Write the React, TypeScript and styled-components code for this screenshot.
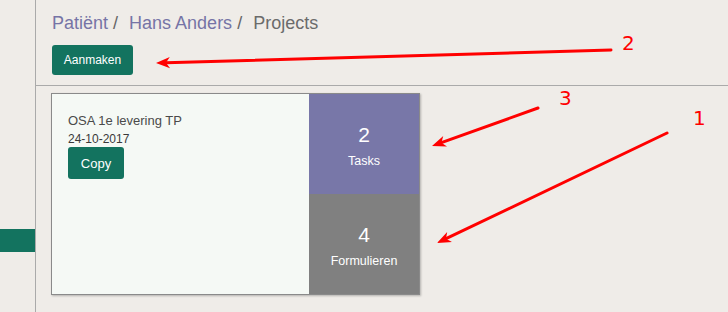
import React from 'react';
import styled, { createGlobalStyle } from 'styled-components';

const GlobalStyle = createGlobalStyle`
  html, body {
    margin: 0;
    padding: 0;
    background: #efece8;
  }
  body {
    font-family: "Liberation Sans", Arial, sans-serif;
  }
`;

const Page = styled.div`
  position: relative;
  display: flex;
  width: 728px;
  height: 312px;
  overflow: hidden;
  background: #efece8;
`;

const Sidebar = styled.aside`
  width: 35px;
  flex-shrink: 0;
  border-right: 1px solid #aaaaaa;
  padding-top: 229px;
`;

const SideActive = styled.div`
  height: 23px;
  background: #13735f;
`;

const Main = styled.main`
  flex: 1;
  display: flex;
  flex-direction: column;
`;

const Header = styled.header`
  padding: 13px 0 10px 16px;
  border-bottom: 1px solid #aaaaaa;
`;

const Breadcrumb = styled.nav`
  display: flex;
  font-size: 18px;
  line-height: 20px;
  color: #666666;
  margin-bottom: 12px;
`;

const Crumb = styled.a<{ $active?: boolean }>`
  color: ${p => (p.$active ? '#6b6b6b' : '#7674a6')};
  text-decoration: none;
`;

const Sep = styled.span`
  margin: 0 11px 0 5px;
  color: #666666;
`;

const Button = styled.button<{ $w: number; $h: number; $size: number }>`
  display: inline-flex;
  align-items: center;
  justify-content: center;
  width: ${p => p.$w}px;
  height: ${p => p.$h}px;
  padding: 0;
  border: none;
  border-radius: 3px;
  background: #13735f;
  color: #ffffff;
  font-family: "Liberation Sans", Arial, sans-serif;
  font-size: ${p => p.$size}px;
  cursor: pointer;
`;

const Content = styled.section`
  padding: 7px 0 0 15px;
`;

const Card = styled.div`
  display: flex;
  width: 367px;
  height: 200px;
  border: 1px solid #8a8a8a;
  box-shadow: 1px 1px 2px rgba(0, 0, 0, 0.25);
`;

const CardBody = styled.div`
  flex: 1;
  background: #f5f9f5;
  padding: 19px 16px;
`;

const CardTitle = styled.div`
  font-size: 13px;
  line-height: 15px;
  color: #4a4a4a;
`;

const CardDate = styled.div`
  font-size: 12px;
  line-height: 14px;
  color: #3a3a3a;
  margin: 4px 0 1px;
`;

const Stats = styled.div`
  width: 110px;
  display: flex;
  flex-direction: column;
`;

const Stat = styled.div<{ $bg: string }>`
  flex: 1;
  display: flex;
  flex-direction: column;
  align-items: center;
  justify-content: center;
  background: ${p => p.$bg};
  color: #ffffff;
  padding-top: 4px;
`;

const StatNum = styled.div`
  font-size: 21px;
  line-height: 24px;
`;

const StatLabel = styled.div`
  font-size: 12.5px;
  line-height: 15px;
  margin-top: 7px;
`;

const Overlay = styled.svg`
  position: absolute;
  left: 0;
  top: 0;
  pointer-events: none;
`;

const Mark = styled.text`
  font-family: "DejaVu Sans", sans-serif;
  font-size: 20px;
  fill: #ff0000;
`;

const arrows = [
  { x1: 611, y1: 50, x2: 156, y2: 63 },
  { x1: 538, y1: 108, x2: 432, y2: 146 },
  { x1: 667, y1: 133, x2: 437, y2: 243 },
];

const ArrowHead: React.FC<{ x1: number; y1: number; x2: number; y2: number }> = ({ x1, y1, x2, y2 }) => {
  const a = Math.atan2(y1 - y2, x1 - x2);
  const len = 15;
  const spread = 0.38;
  const p1 = [x2 + len * Math.cos(a + spread), y2 + len * Math.sin(a + spread)];
  const p2 = [x2 + len * Math.cos(a - spread), y2 + len * Math.sin(a - spread)];
  const n = [x2 + 10 * Math.cos(a), y2 + 10 * Math.sin(a)];
  return (
    <g>
      <line x1={x1} y1={y1} x2={n[0]} y2={n[1]} stroke="#ff0000" strokeWidth={3} strokeLinecap="round" />
      <polygon points={`${x2},${y2} ${p1[0]},${p1[1]} ${n[0]},${n[1]} ${p2[0]},${p2[1]}`} fill="#ff0000" />
    </g>
  );
};

export default function App() {
  return (
    <>
      <GlobalStyle />
      <Page>
        <Sidebar>
          <SideActive />
        </Sidebar>
        <Main>
          <Header>
            <Breadcrumb>
              <Crumb href="#">Patiënt</Crumb>
              <Sep>/</Sep>
              <Crumb href="#">Hans Anders</Crumb>
              <Sep>/</Sep>
              <Crumb $active>Projects</Crumb>
            </Breadcrumb>
            <Button $w={81} $h={30} $size={12}>Aanmaken</Button>
          </Header>
          <Content>
            <Card>
              <CardBody>
                <CardTitle>OSA 1e levering TP</CardTitle>
                <CardDate>24-10-2017</CardDate>
                <Button $w={56} $h={32} $size={13}>Copy</Button>
              </CardBody>
              <Stats>
                <Stat $bg="#7877a8">
                  <StatNum>2</StatNum>
                  <StatLabel>Tasks</StatLabel>
                </Stat>
                <Stat $bg="#808080">
                  <StatNum>4</StatNum>
                  <StatLabel>Formulieren</StatLabel>
                </Stat>
              </Stats>
            </Card>
          </Content>
        </Main>
        <Overlay width={728} height={312}>
          {arrows.map((a, i) => (
            <ArrowHead key={i} {...a} />
          ))}
          <Mark x={622} y={50}>2</Mark>
          <Mark x={559} y={105}>3</Mark>
          <Mark x={693} y={125}>1</Mark>
        </Overlay>
      </Page>
    </>
  );
}
